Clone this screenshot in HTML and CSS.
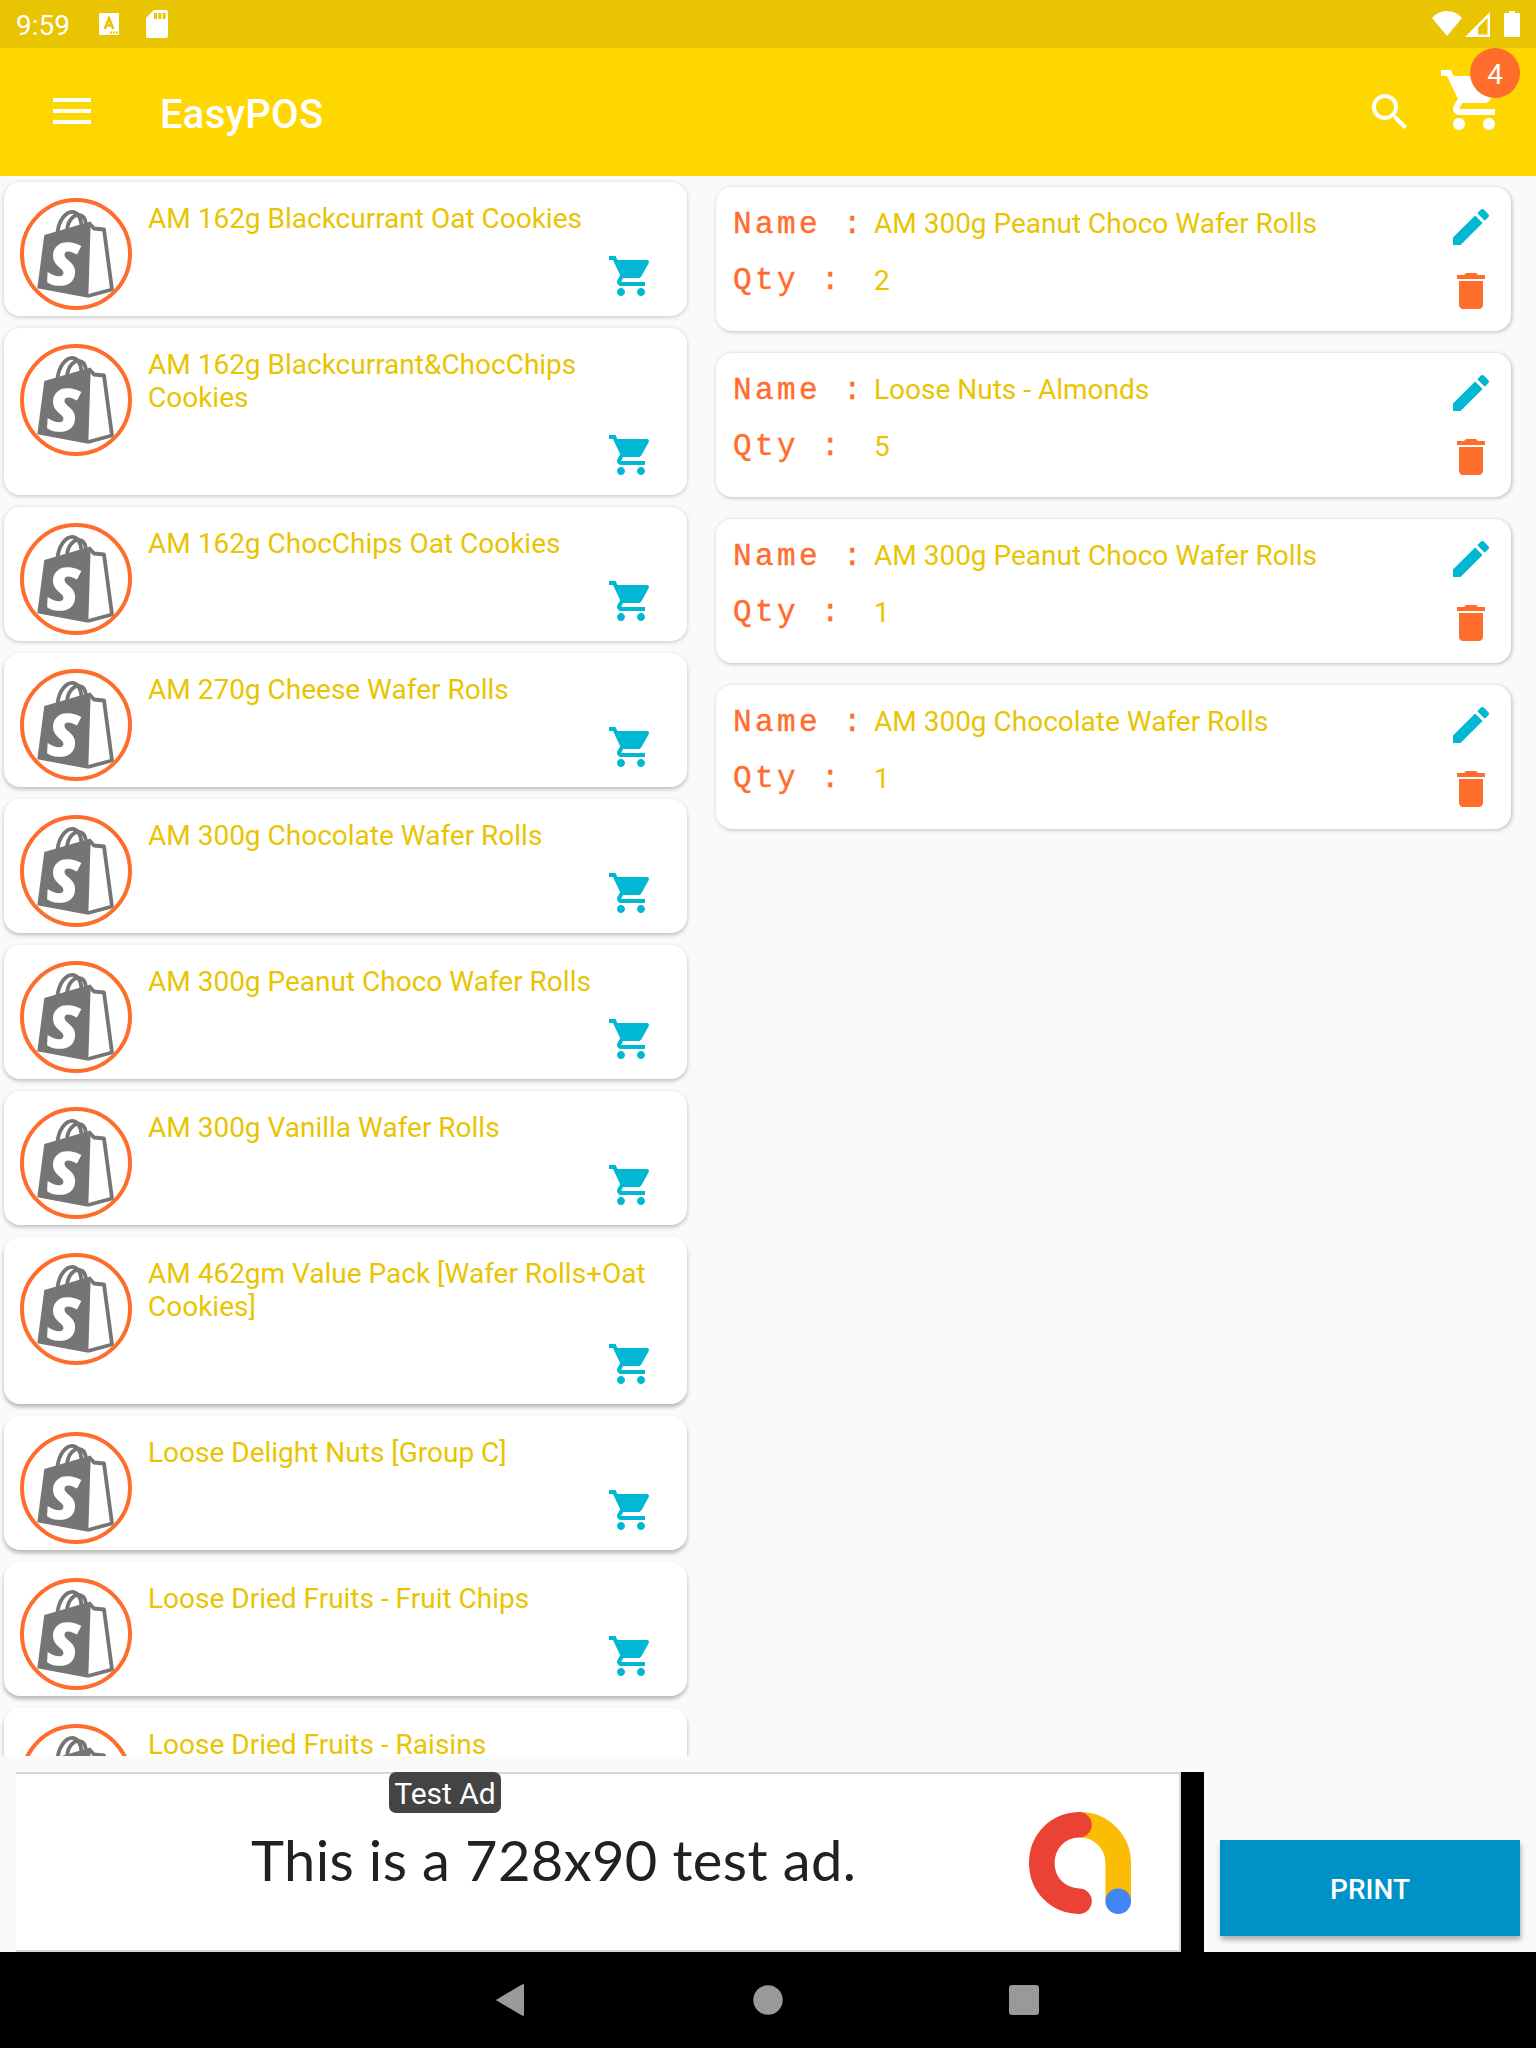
FILE: index.html
```html
<!DOCTYPE html>
<html lang="en">
<head>
<meta charset="utf-8">
<title>EasyPOS</title>
<link rel="stylesheet" href="styles.css">
</head>
<body>
<svg class="defs" width="0" height="0">
  <symbol id="cart" viewBox="0 0 24 24"><path d="M7 18c-1.100 0-1.990.9-1.990 2S5.900 22 7 22s2-.9 2-2-.9-2-2-2zM1 2v2h2l3.600 7.590-1.350 2.450c-.16.28-.25.61-.25.96 0 1.100.9 2 2 2h12v-2H7.420c-.14 0-.25-.11-.25-.25l.03-.12.9-1.630h7.450c.75 0 1.410-.41 1.750-1.030l3.580-6.490A1 1 0 0 0 20.010 4H5.210l-.94-2H1zm16 16c-1.100 0-1.990.9-1.990 2s.89 2 1.990 2 2-.9 2-2-.9-2-2-2z"/></symbol>
  <symbol id="edit" viewBox="0 0 24 24"><path d="M3 17.250V21h3.750L17.810 9.940l-3.750-3.750L3 17.250zM20.710 7.040c.39-.39.39-1.020 0-1.410l-2.340-2.340c-.39-.39-1.020-.39-1.410 0l-1.830 1.830 3.750 3.750 1.830-1.830z"/></symbol>
  <symbol id="trash" viewBox="0 0 24 24"><path d="M6 19c0 1.100.9 2 2 2h8c1.100 0 2-.9 2-2V7H6v12zM19 4h-3.500l-1-1h-5l-1 1H5v2h14V4z"/></symbol>
  <symbol id="bag" viewBox="0 0 104 104">
    <g fill="none" stroke="#757575" stroke-width="3.800" stroke-linejoin="round">
      <path d="M33.500 30C35 18 42 9.500 48.500 9.800C54 10.500 57 16 57.500 24"/>
      <path d="M43 28C44 18 50 12.500 55 13C60 13.500 61.500 17 62 22"/>
      <path d="M65 21L70 26.500L80 27.500L88 87.500L64 94"/>
    </g>
    <path fill="#757575" d="M20.300 33L66.700 19.500L64.300 95.700L13.300 86.300Z"/>
    <text class="bag-letter" x="23" y="83.500" transform="rotate(3 40 60)">S</text>
  </symbol>
</svg>

<header class="status-bar">
  <span class="clock">9:59</span>
  <svg class="ico-lang" viewBox="0 0 20 22"><path fill="#fff" d="M1 0H19Q20 0 20 1V21Q20 22 19 22H1Q0 22 0 21V1Q0 0 1 0Z"/><path fill="none" stroke="#e8c402" stroke-width="2.600" d="M5.700 16L10 5.500L14.300 16M7 12.500H13"/><path fill="#e8c402" d="M11 18.500h2v2h-2zM14 18.500h2v2h-2zM17 18.500h2v2h-2z"/></svg>
  <svg class="ico-sd" viewBox="0 0 22 28"><path fill="#fff" d="M8 0H20Q22 0 22 2V26Q22 28 20 28H2Q0 28 0 26V8Z"/><path fill="#e8c402" d="M8 3h3v6H8zM12.300 3h3v6h-3zM16.600 3h3v6h-3z"/></svg>
  <svg class="ico-wifi" viewBox="0 0 30 25"><path fill="#fff" d="M15 25L0 7Q6 0 15 0T30 7Z"/></svg>
  <svg class="ico-signal" viewBox="0 0 25 25"><path fill="#fff" fill-rule="evenodd" d="M0 25L25 0V25ZM13 15.500V22.500H22.500V6Z"/></svg>
  <svg class="ico-battery" viewBox="0 0 16 26"><path fill="#fff" d="M5 0h6v2h4q1 0 1 1v22q0 1-1 1H1q-1 0-1-1V3q0-1 1-1h4z"/></svg>
</header>

<div class="app-bar">
  <svg class="menu" viewBox="0 0 38 26"><path fill="#fff" d="M0 0h38v4H0zM0 11h38v4H0zM0 22h38v4H0z"/></svg>
  <h1 class="title">EasyPOS</h1>
  <svg class="search" viewBox="0 0 24 24"><path fill="#fff" d="M15.500 14h-.79l-.28-.27A6.470 6.470 0 0 0 16 9.500 6.500 6.500 0 1 0 9.500 16c1.610 0 3.090-.59 4.230-1.570l.27.28v.79l5 4.990L20.490 19l-4.990-5zm-6 0C7.010 14 5 11.990 5 9.500S7.010 5 9.500 5 14 7.010 14 9.500 11.990 14 9.500 14z"/></svg>
  <div class="basket"><svg><use href="#cart"/></svg><span class="badge">4</span></div>
</div>

<main class="content">
  <section class="products">
    <article class="product"><svg class="avatar"><use href="#bag"/></svg><p>AM 162g Blackcurrant Oat Cookies</p><svg class="add"><use href="#cart"/></svg></article>
    <article class="product"><svg class="avatar"><use href="#bag"/></svg><p>AM 162g Blackcurrant&amp;ChocChips Cookies</p><svg class="add"><use href="#cart"/></svg></article>
    <article class="product"><svg class="avatar"><use href="#bag"/></svg><p>AM 162g ChocChips Oat Cookies</p><svg class="add"><use href="#cart"/></svg></article>
    <article class="product"><svg class="avatar"><use href="#bag"/></svg><p>AM 270g Cheese Wafer Rolls</p><svg class="add"><use href="#cart"/></svg></article>
    <article class="product"><svg class="avatar"><use href="#bag"/></svg><p>AM 300g Chocolate Wafer Rolls</p><svg class="add"><use href="#cart"/></svg></article>
    <article class="product"><svg class="avatar"><use href="#bag"/></svg><p>AM 300g Peanut Choco Wafer Rolls</p><svg class="add"><use href="#cart"/></svg></article>
    <article class="product"><svg class="avatar"><use href="#bag"/></svg><p>AM 300g Vanilla Wafer Rolls</p><svg class="add"><use href="#cart"/></svg></article>
    <article class="product"><svg class="avatar"><use href="#bag"/></svg><p>AM 462gm Value Pack [Wafer Rolls+Oat Cookies]</p><svg class="add"><use href="#cart"/></svg></article>
    <article class="product"><svg class="avatar"><use href="#bag"/></svg><p>Loose Delight Nuts [Group C]</p><svg class="add"><use href="#cart"/></svg></article>
    <article class="product"><svg class="avatar"><use href="#bag"/></svg><p>Loose Dried Fruits - Fruit Chips</p><svg class="add"><use href="#cart"/></svg></article>
    <article class="product"><svg class="avatar"><use href="#bag"/></svg><p>Loose Dried Fruits - Raisins</p><svg class="add"><use href="#cart"/></svg></article>
  </section>
  <section class="order">
    <article class="line"><dl><dt>Name :</dt><dd>AM 300g Peanut Choco Wafer Rolls</dd><dt>Qty :</dt><dd>2</dd></dl><div class="actions"><svg class="edit"><use href="#edit"/></svg><svg class="trash"><use href="#trash"/></svg></div></article>
    <article class="line"><dl><dt>Name :</dt><dd>Loose Nuts - Almonds</dd><dt>Qty :</dt><dd>5</dd></dl><div class="actions"><svg class="edit"><use href="#edit"/></svg><svg class="trash"><use href="#trash"/></svg></div></article>
    <article class="line"><dl><dt>Name :</dt><dd>AM 300g Peanut Choco Wafer Rolls</dd><dt>Qty :</dt><dd>1</dd></dl><div class="actions"><svg class="edit"><use href="#edit"/></svg><svg class="trash"><use href="#trash"/></svg></div></article>
    <article class="line"><dl><dt>Name :</dt><dd>AM 300g Chocolate Wafer Rolls</dd><dt>Qty :</dt><dd>1</dd></dl><div class="actions"><svg class="edit"><use href="#edit"/></svg><svg class="trash"><use href="#trash"/></svg></div></article>
  </section>
</main>

<footer class="bottom">
  <div class="ad">
    <div class="ad-body">
      <span class="ad-tag">Test Ad</span>
      <span class="ad-text">This is a 728x90 test ad.</span>
      <svg class="ad-logo" viewBox="0 0 102 102" fill="none" stroke-width="25.600">
        <path stroke="#fbbc05" d="M51 12.800A38.200 38.200 0 0 1 89.200 51V89"/>
        <path stroke="#ea4335" stroke-linecap="round" d="M50 12.800C28 13.500 12.800 30 12.800 51S28 88.500 50 89.200"/>
        <circle cx="89.200" cy="89.200" r="12.800" fill="#4285f4"/>
      </svg>
    </div>
  </div>
  <button class="print">PRINT</button>
</footer>

<nav class="nav">
  <svg viewBox="0 0 30 32"><path fill="#999" d="M0 15.200L25 .4Q27 -.6 27 1.400V30.600Q27 32.600 25 31.600L0 16.800Q-2 16 0 15.200Z"/></svg>
  <svg viewBox="0 0 30 30"><circle cx="15" cy="15" r="14.700" fill="#999"/></svg>
  <svg viewBox="0 0 30 30"><rect width="30" height="30" rx="3" fill="#999"/></svg>
</nav>
</body>
</html>
```
FILE: styles.css
```css
* { box-sizing: border-box; margin: 0; padding: 0; }
body {
  width: 1536px;
  height: 2048px;
  display: flex;
  flex-direction: column;
  overflow: hidden;
  background: #fafafa;
  font-family: Roboto, sans-serif;
  font-size: 28px;
  line-height: 33px;
}
svg { display: block; flex: none; }
.defs { display: none; }

.status-bar {
  flex: none;
  height: 48px;
  display: flex;
  align-items: flex-start;
  padding: 0 16px 0 16px;
  background: #e8c402;
  color: #fff;
}
.clock { width: 83px; margin-top: 9px; }
.ico-lang { width: 20px; height: 22px; margin: 13px 27px 0 0; }
.ico-sd { width: 22px; height: 28px; margin: 10px auto 0 0; }
.ico-wifi { width: 30px; height: 25px; margin: 11px 3px 0 0; }
.ico-signal { width: 25px; height: 25px; margin: 12px 14px 0 0; }
.ico-battery { width: 16px; height: 26px; margin-top: 11px; }

.app-bar {
  flex: none;
  height: 128px;
  display: flex;
  align-items: flex-start;
  padding: 0 16px 0 53px;
  background: #ffd700;
  color: #fff;
}
.menu { width: 38px; height: 26px; margin-top: 50px; }
.title {
  margin: 43px auto 0 69px;
  font-size: 40px;
  line-height: 47px;
  font-weight: 500;
  letter-spacing: .25px;
}
.search { width: 48px; height: 48px; margin: 40px 24px 0 0; }
.basket { position: relative; width: 82px; height: 88px; }
.basket svg { width: 72px; height: 72px; margin-top: 16px; fill: #fff; }
.badge {
  position: absolute;
  top: 0;
  right: 0;
  width: 50px;
  height: 50px;
  border-radius: 50%;
  background: #ff6d2d;
  line-height: 53px;
  text-align: center;
}

.content {
  flex: none;
  height: 1580px;
  display: flex;
  overflow: hidden;
}
.products {
  width: 691px;
  display: flex;
  flex-direction: column;
  gap: 12px;
  padding: 6px 4px 0;
}
.product, .line {
  flex: none;
  background: #fff;
  border-radius: 16px;
  box-shadow: 0 1px 4px rgba(0, 0, 0, .22);
}
.product {
  display: grid;
  grid-template-columns: 112px 1fr;
  column-gap: 16px;
  padding: 16px;
}
.product:nth-child(n+4) { box-shadow: 0 2px 4px rgba(0, 0, 0, .25); }
.product:nth-child(n+8) { box-shadow: 0 3px 4px rgba(0, 0, 0, .28); }
.avatar {
  grid-row: 1 / 3;
  width: 112px;
  height: 112px;
  margin-bottom: -10px;
  border: 4px solid #ff6d2d;
  border-radius: 50%;
}
.bag-letter { font: italic 800 60px "Open Sans", sans-serif; fill: #fff; }
.product p { margin-top: 4px; padding-right: 16px; color: #e8c402; }
.add {
  width: 48px;
  height: 48px;
  margin: 17px 16px 0 auto;
  fill: #00b8d4;
}

.order {
  width: 820px;
  display: flex;
  flex-direction: column;
  gap: 22px;
  padding: 11px 0 0 25px;
}
.line {
  height: 144px;
  display: flex;
  justify-content: space-between;
  padding: 16px 16px 0;
  box-shadow: 1px 1px 4px rgba(0, 0, 0, .25);
}
.line dl {
  display: grid;
  grid-template-columns: 142px auto;
  grid-auto-rows: 33px;
  row-gap: 24px;
  margin-top: 4px;
}
.line dt {
  padding-left: 1px;
  color: #ff6d2d;
  font-family: "Liberation Mono", monospace;
  font-size: 31px;
  letter-spacing: 3.4px;
  white-space: nowrap;
  -webkit-text-stroke: .4px #ff6d2d;
}
.line dt:first-child { padding-top: 1px; }
.line dd { color: #e8c402; }
.actions { display: grid; grid-auto-rows: 48px; gap: 16px; }
.actions svg { width: 48px; height: 48px; }
.edit { fill: #00b8d4; }
.trash { fill: #ff6d2d; }

.bottom {
  flex: none;
  height: 196px;
  display: flex;
  align-items: flex-end;
  padding: 0 16px;
  gap: 16px;
}
.ad { width: 1188px; height: 180px; padding-right: 23px; background: #000; }
.ad-body {
  position: relative;
  height: 180px;
  display: flex;
  align-items: center;
  justify-content: space-between;
  padding: 0 48px 0 235px;
  border: solid #cfd8dc;
  border-width: 2px 2px 2px 0;
  background: #fff;
}
.ad-tag {
  position: absolute;
  top: -2px;
  left: 373px;
  width: 112px;
  height: 41px;
  border-radius: 7px;
  background: #444;
  color: #fff;
  font-size: 30px;
  line-height: 43px;
  text-align: center;
}
.ad-text {
  margin-bottom: 4px;
  font-family: Lato, sans-serif;
  font-size: 56px;
  line-height: 66px;
  letter-spacing: .4px;
  color: #202124;
  white-space: nowrap;
}
.ad-logo { width: 102px; height: 102px; margin-top: 2px; }
.print {
  width: 300px;
  height: 96px;
  margin-bottom: 16px;
  padding-top: 2px;
  border: 0;
  background: #0091c7;
  box-shadow: 1px 4px 5px rgba(0, 0, 0, .3);
  color: #fff;
  font: 500 28px/33px Roboto, sans-serif;
}

.nav {
  flex: none;
  height: 96px;
  display: flex;
  align-items: center;
  justify-content: center;
  gap: 226px;
  background: #000;
}
.nav svg { width: 30px; height: 32px; overflow: visible; }
```
